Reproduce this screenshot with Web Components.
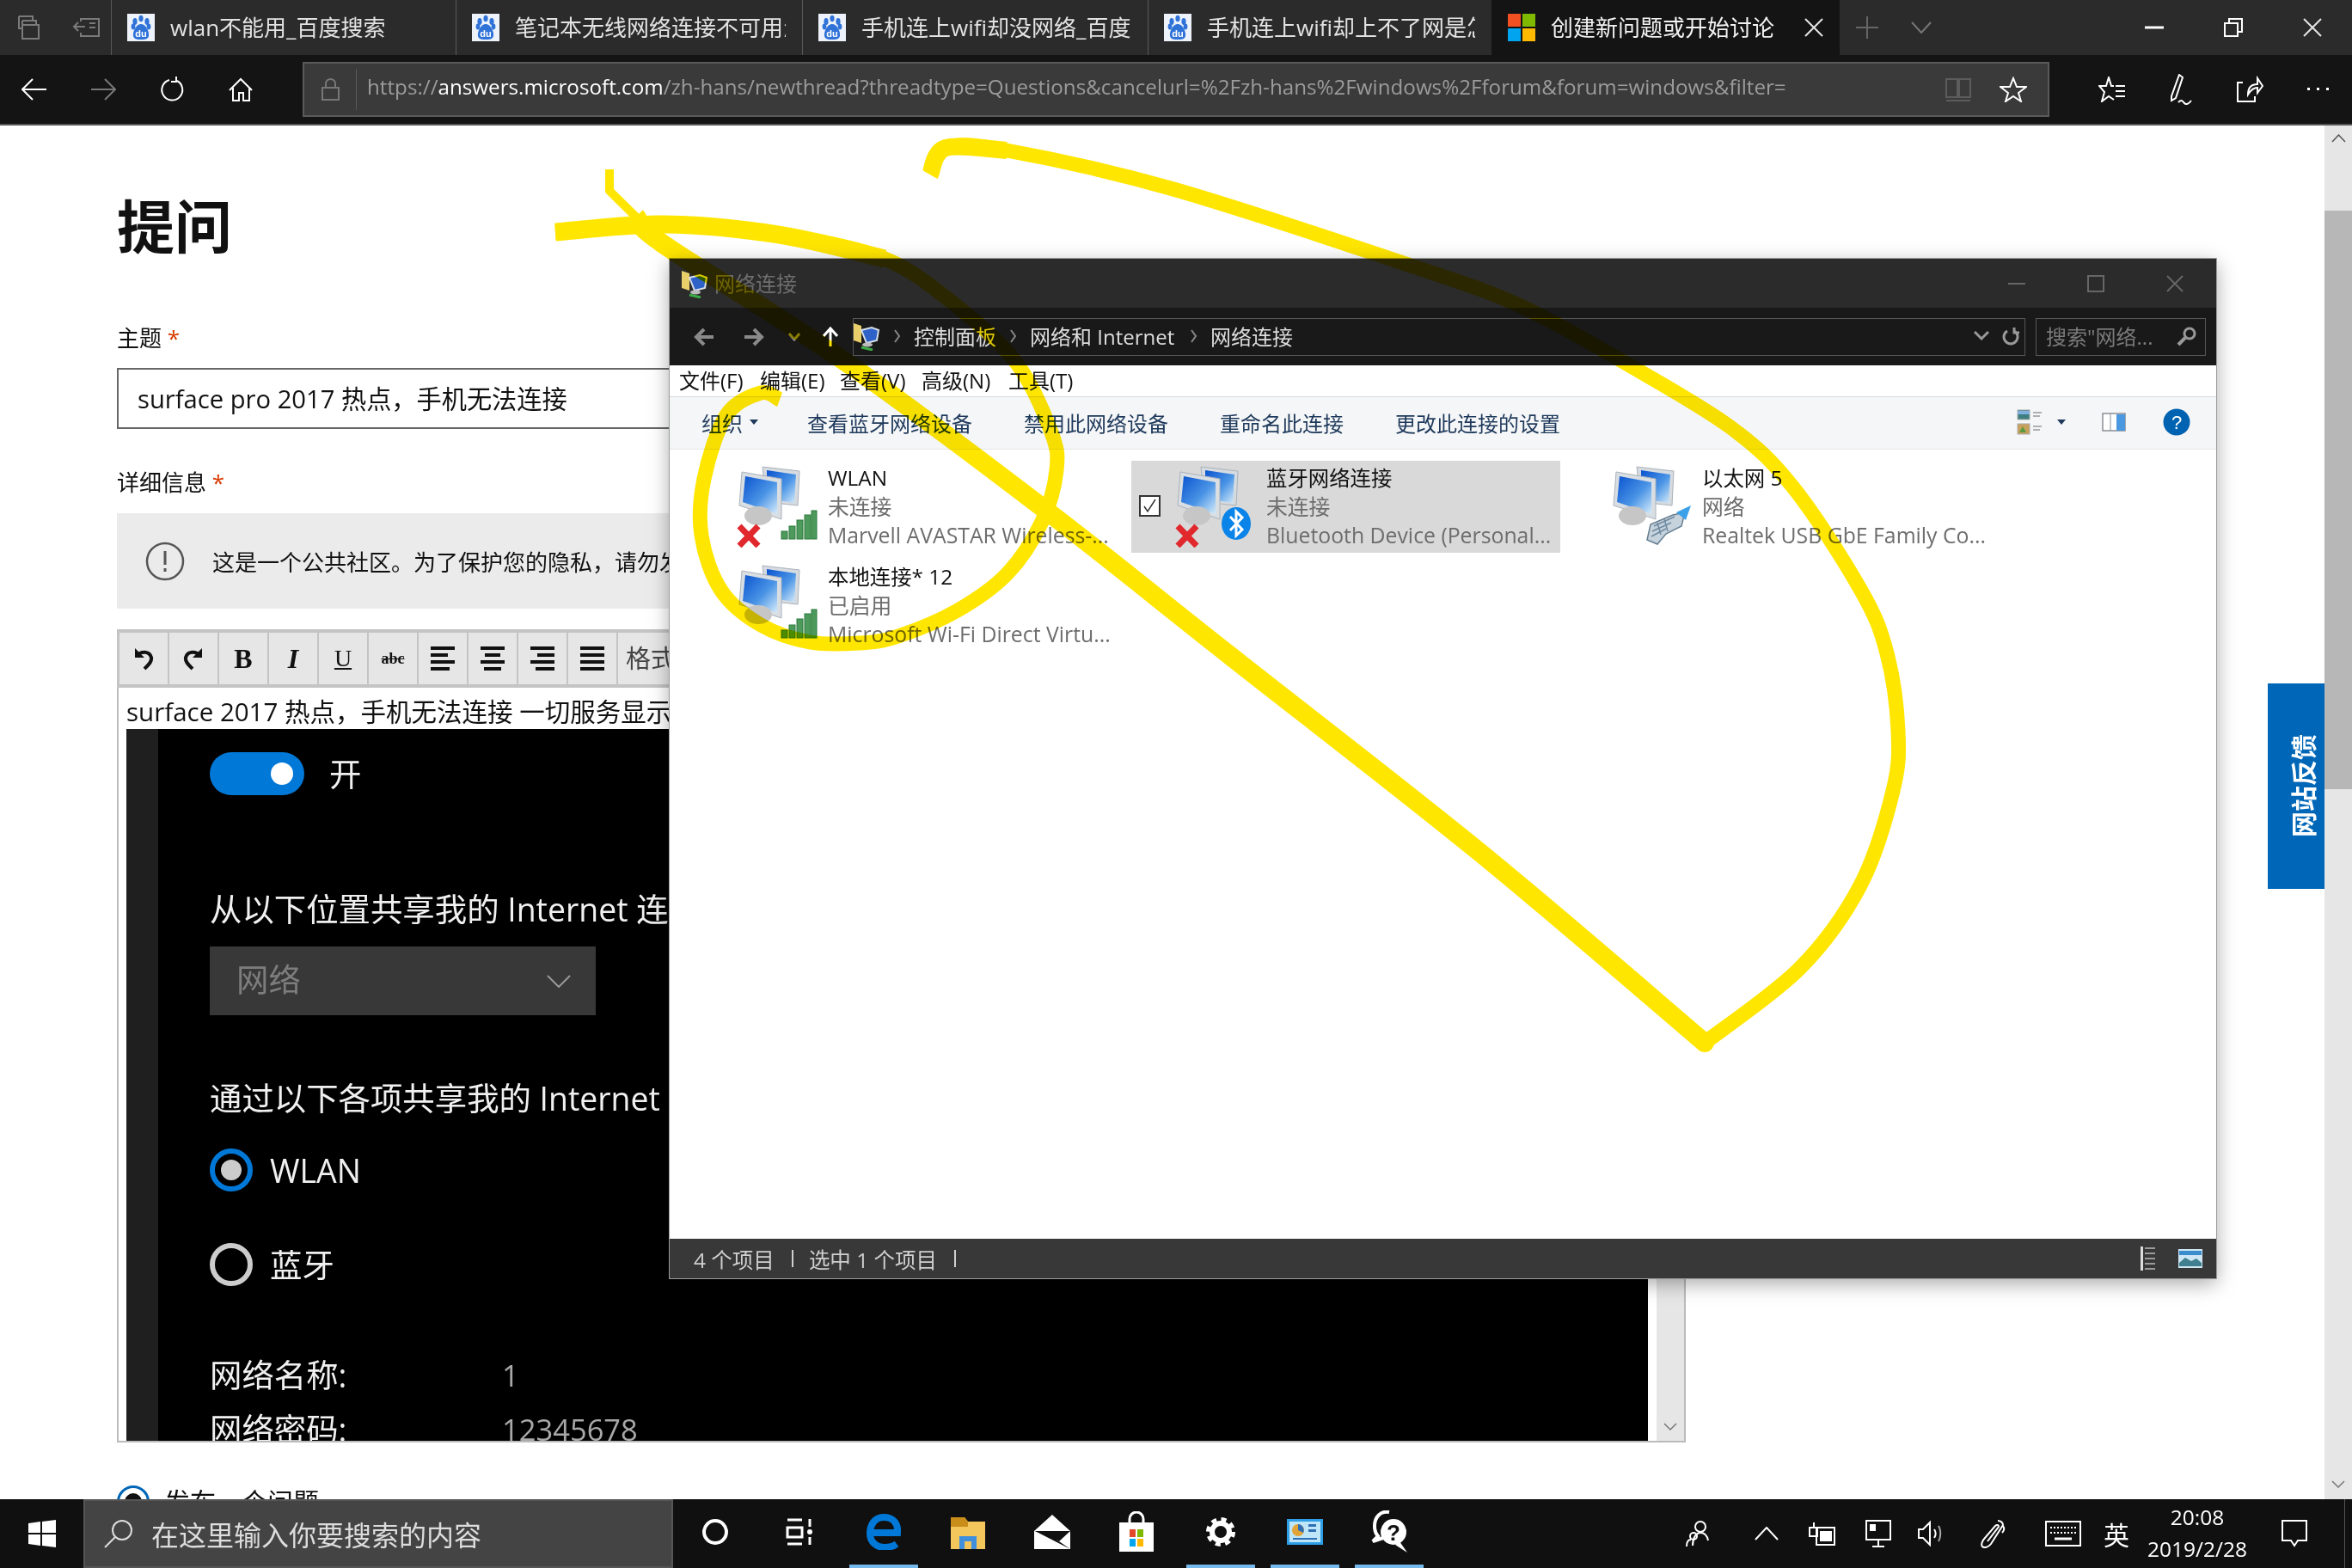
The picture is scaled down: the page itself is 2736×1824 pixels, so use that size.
<!DOCTYPE html>
<html lang="zh-Hans">
<head>
<meta charset="utf-8">
<title>提问</title>
<style>
  html, body { margin: 0; padding: 0; background: #fff; }
  body { width: 2736px; height: 1824px; overflow: hidden; position: relative;
         font-family: "Open Sans", "Noto Sans CJK SC", sans-serif; display: flex; flex-direction: column; }
</style>
</head>
<body>

<edge-chrome></edge-chrome>

<page-main>
  <forum-page></forum-page>
  <page-scrollbar></page-scrollbar>
</page-main>

<win-taskbar></win-taskbar>

<net-window></net-window>
<ink-overlay></ink-overlay>

<script>
const UI_FONT = '"Open Sans", "Noto Sans CJK SC", sans-serif';

/* Icons, sized in real pixels */
const ICONS = {
  tabset: [28, 28, `<g fill="none" stroke="#7a7a7a" stroke-width="2"><path d="M3 1h16v5M3 1v14h4"/><path d="M7 6h16v5M7 6v9"/><rect x="7" y="11" width="19" height="16"/></g>`],
  tabback: [32, 22, `<g fill="none" stroke="#7a7a7a" stroke-width="2"><path d="M10 4V1h21v20H10v-4"/><path d="M15 10H2M7 5l-5 5 5 5M20 6h7M20 11h7"/></g>`],
  plus: [26, 26, `<path d="M13 0v26M0 13h26" stroke="#666" stroke-width="2" fill="none"/>`],
  caret: [24, 14, `<path d="M1 1l11 12L23 1" stroke="#777" stroke-width="2" fill="none"/>`],
  xw: [22, 22, `<path d="M1 1l20 20M21 1L1 21" stroke="#e6e6e6" stroke-width="2" fill="none"/>`],
  min: [22, 4, `<path d="M0 2h22" stroke="#fff" stroke-width="3"/>`],
  restore: [22, 22, `<g fill="none" stroke="#fff" stroke-width="2"><rect x="1" y="6" width="15" height="15"/><path d="M6 6V1h15v15h-5"/></g>`],
  back: [30, 26, `<path d="M29 13H2M13 1L1 13l12 12" stroke="#fff" stroke-width="2" fill="none"/>`],
  forward: [30, 26, `<path d="M1 13h27M17 1l12 12-12 12" stroke="#777" stroke-width="2" fill="none"/>`],
  refresh: [30, 30, `<path d="M12 4a12 12 0 1 0 9 1M20 0v6h-6" stroke="#fff" stroke-width="2" fill="none"/>`],
  home: [30, 28, `<path d="M2 15L15 2l13 13M6 12v15h7v-9h5v9h7V12" stroke="#fff" stroke-width="2" fill="none"/>`],
  lock: [21, 26, `<g fill="none" stroke="#777" stroke-width="2"><rect x="1" y="11" width="19" height="14"/><path d="M5 11V6a5.500 5 0 0 1 11 0v5"/></g>`],
  book: [30, 28, `<g fill="none" stroke="#5c5c5c" stroke-width="2"><path d="M1 2h13v21H1zM16 2h13v21H16zM1 27h28"/></g>`],
  star: [32, 30, `<path d="M16 2l4 10h11l-9 7 3 10-9-6-9 6 3-10-9-7h11z" stroke="#fff" stroke-width="2" fill="none"/>`],
  hub: [32, 30, `<path d="M18 11h-3L12 1 9 11H1l6 7-3 11 8-6 6 4M20 11h11M20 17h11M20 23h11" stroke="#fff" stroke-width="2" fill="none"/>`],
  pen: [34, 36, `<path d="M15 1l4 3-8 24-5 3V26zM14 33c4-4 5-1 7 1s5 1 8-3" stroke="#fff" stroke-width="2" fill="none"/>`],
  share: [32, 32, `<path d="M8 8H2v22h20v-6M14 22c0-9 5-12 11-12V3l6 9-6 8v-6c-5 0-8 3-11 8z" stroke="#fff" stroke-width="2" fill="none"/>`],
  dots: [28, 6, `<g fill="#fff"><rect x="1" y="1" width="3" height="3"/><rect x="12" y="1" width="3" height="3"/><rect x="23" y="1" width="3" height="3"/></g>`],
  notice: [46, 46, `<circle cx="23" cy="23" r="21" fill="none" stroke="#555" stroke-width="2.5"/><path d="M23 11v16M23 31v4" stroke="#555" stroke-width="3" fill="none"/>`],
  undo: [30, 28, `<path d="M5 2v11h11" fill="#111"/><path d="M7 11c5-6 15-6 17 2 1 5-4 9-8 13" fill="none" stroke="#111" stroke-width="4"/>`],
  redo: [30, 28, `<path d="M25 2v11H14" fill="#111"/><path d="M23 11C18 5 8 5 6 13c-1 5 4 9 8 13" fill="none" stroke="#111" stroke-width="4"/>`],
  aleft: [30, 28, `<path d="M1 2h28M1 10h20M1 18h28M1 26h22" stroke="#111" stroke-width="4"/>`],
  acenter: [30, 28, `<path d="M1 2h28M6 10h18M1 18h28M5 26h20" stroke="#111" stroke-width="4"/>`],
  aright: [30, 28, `<path d="M1 2h28M9 10h20M1 18h28M7 26h22" stroke="#111" stroke-width="4"/>`],
  ajust: [30, 28, `<path d="M1 2h28M1 10h28M1 18h28M1 26h28" stroke="#111" stroke-width="4"/>`],
  folderPc: [32, 34, `<path d="M0 2l9 3v20L0 22z" fill="#e9cf6a"/><path d="M9 10l12-3 8 3-2 12-12 3z" fill="#2f62c8" stroke="#d7dee8" stroke-width="2"/><ellipse cx="16" cy="27" rx="6" ry="2.500" fill="#bbb"/><path d="M9 30l13 3" stroke="#3bab45" stroke-width="3"/>`],
  wmin: [20, 2, `<path d="M0 1h20" stroke="#666" stroke-width="2"/>`],
  wmax: [20, 20, `<rect x="1" y="1" width="18" height="18" fill="none" stroke="#666" stroke-width="2"/>`],
  wclose: [20, 20, `<path d="M1 1l18 18M19 1L1 19" stroke="#666" stroke-width="2"/>`],
  navback: [24, 22, `<path d="M23 11H4M12 2l-9 9 9 9" fill="none" stroke="#8a8a8a" stroke-width="4"/>`],
  navfwd: [24, 22, `<path d="M1 11h19M12 2l9 9-9 9" fill="none" stroke="#8a8a8a" stroke-width="4"/>`],
  navdown: [14, 10, `<path d="M1 1l6 7 6-7" fill="none" stroke="#8a8a8a" stroke-width="3"/>`],
  navup: [18, 24, `<path d="M9 23V3M1 11l8-9 8 9" fill="none" stroke="#fff" stroke-width="3"/>`],
  crumb: [8, 16, `<path d="M1 1l5 7-5 7" fill="none" stroke="#888" stroke-width="2"/>`],
  addrdown: [18, 12, `<path d="M1 1l8 8 8-8" fill="none" stroke="#999" stroke-width="3"/>`],
  addrref: [20, 22, `<path d="M6 5a8 8 0 1 0 8 0M14 1v6h6" fill="none" stroke="#999" stroke-width="3"/>`],
  searchex: [24, 24, `<circle cx="15" cy="9" r="6" fill="none" stroke="#999" stroke-width="3"/><path d="M10 14l-8 8" stroke="#999" stroke-width="4"/>`],
  viewopts: [30, 30, `<rect x="1" y="1" width="14" height="11" fill="#3d7f7f" stroke="#aaa"/><rect x="1" y="2" width="14" height="4" fill="#7fb0e0"/><rect x="1" y="17" width="14" height="12" fill="#c9a15a" stroke="#aaa"/><path d="M3 27l4-7 4 7z" fill="#5a9a40"/><path d="M19 4h10M19 8h8M19 20h10M19 24h8" stroke="#999" stroke-width="1.500"/>`],
  tridown: [10, 6, `<path d="M0 0h10L5 6z" fill="#1e395b"/>`],
  pane: [28, 22, `<rect x="1" y="1" width="26" height="20" fill="#fff" stroke="#8a8f96" stroke-width="1.500"/><path d="M10 1v20" stroke="#8a8f96"/><rect x="17" y="2" width="10" height="19" fill="#4a98e0"/>`],
  help: [32, 32, `<circle cx="16" cy="16" r="15.500" fill="#0063b1"/><text x="16" y="24" font-size="22" text-anchor="middle" fill="#fff" font-family="Liberation Sans, sans-serif">?</text>`],
  stdetails: [18, 28, `<rect x="0" y="0" width="3" height="28" fill="#ddd"/><path d="M5 2h12M5 8h12M5 14h12M5 20h12M5 26h12" stroke="#9a9a9a" stroke-width="2"/>`],
  stthumb: [28, 22, `<rect width="28" height="22" fill="#cfe6f4"/><rect x="1" y="2" width="26" height="5" fill="#3a8ccc"/><path d="M1 16l7-6 7 4 6-3 6 5v4H1z" fill="#3f7f8f"/>`],
  cb: [25, 25, `<rect x="1" y="1" width="23" height="23" fill="#fff" stroke="#333" stroke-width="2"/><path d="M6 13l4 6 9-14" fill="none" stroke="#333" stroke-width="1.500"/>`],
  win: [32, 32, `<path d="M0 4l14-2v13H0zM16 2l16-2v15H16zM0 17h14v13L0 28zM16 17h16v15l-16-2z" fill="#fff"/>`],
  mag: [34, 34, `<circle cx="21" cy="13" r="11" fill="none" stroke="#ddd" stroke-width="2"/><path d="M13 21L1 33" stroke="#ddd" stroke-width="2"/>`],
  cortana: [32, 32, `<circle cx="16" cy="16" r="13" fill="none" stroke="#fff" stroke-width="4"/>`],
  taskview: [32, 32, `<path d="M2 2h17M2 30h17" stroke="#fff" stroke-width="3"/><rect x="2" y="11" width="17" height="11" fill="none" stroke="#fff" stroke-width="3"/><path d="M28 1v9M28 22v9" stroke="#fff" stroke-width="3"/><circle cx="28" cy="16" r="3" fill="#fff"/>`],
  edge: [40, 42, `<path d="M6 22h30C37 10 30 4 20 4 10 4 4 12 4 23c0 10 8 16 17 16 6 0 10-1 14-4" fill="none" stroke="#0078d7" stroke-width="8"/>`],
  folder: [42, 42, `<path d="M1 4h16l4 5h20v32H1z" fill="#f3c75c"/><path d="M1 4h16l4 5v6H1z" fill="#c98e1a"/><path d="M11 41V26h20v15h-6V32h-8v9z" fill="#3f8fdd"/>`],
  mail: [44, 42, `<path d="M22 1l21 19v21H1V20z" fill="#fff"/><path d="M2 20l41 0-16 10 16 11z" fill="#111"/><path d="M2 20h41L30 32 22 27z" fill="#111"/><path d="M5 20h34L22 5z" fill="#fff"/><path d="M1 20l17 20H1z" fill="#fff"/>`],
  store: [44, 48, `<rect x="2" y="13" width="40" height="34" fill="#fff"/><path d="M14 13V9a8 8 0 0 1 16 0v4" fill="none" stroke="#fff" stroke-width="3"/><rect x="14" y="21" width="7" height="9" fill="#e2492b"/><rect x="23" y="21" width="7" height="9" fill="#7fba00"/><rect x="14" y="32" width="7" height="9" fill="#00a4ef"/><rect x="23" y="32" width="7" height="9" fill="#ffb900"/>`],
  gear: [36, 36, `<circle cx="18" cy="18" r="10" fill="none" stroke="#fff" stroke-width="6"/><circle cx="18" cy="18" r="14.500" fill="none" stroke="#fff" stroke-width="5" stroke-dasharray="6 5.400"/>`],
  cpanel: [42, 30, `<rect width="42" height="30" fill="#2e9fe6"/><rect x="3" y="3" width="36" height="24" fill="#bfe6f8"/><circle cx="13" cy="13" r="7" fill="#e3a437"/><path d="M13 13V6a7 7 0 0 1 6 10z" fill="#2f6fb6"/><rect x="25" y="6" width="9" height="3" fill="#2f6fb6"/><rect x="25" y="12" width="9" height="3" fill="#2f6fb6"/><rect x="7" y="22" width="28" height="2" fill="#2f6fb6"/>`],
  feedback: [48, 50, `<path d="M24 2C14 0 7 8 7 18c0 6 2 10 4 12L5 36l12-4" fill="none" stroke="#fff" stroke-width="4"/><circle cx="29" cy="25" r="15" fill="#fff"/><path d="M36 36l9 13-14-9z" fill="#fff"/><text x="29" y="35" font-size="26" font-weight="700" text-anchor="middle" fill="#111" font-family="Liberation Sans, sans-serif">?</text>`],
  people: [28, 32, `<circle cx="17" cy="8" r="6" fill="none" stroke="#fff" stroke-width="2"/><path d="M8 30c0-9 4-15 9-15s8 4 9 9M1 31c0-5 2-8 5-8" fill="none" stroke="#fff" stroke-width="2"/><circle cx="9" cy="19" r="4" fill="none" stroke="#fff" stroke-width="2"/>`],
  trayup: [28, 16, `<path d="M1 15L14 1l13 14" fill="none" stroke="#fff" stroke-width="2"/>`],
  battery: [32, 28, `<path d="M6 1v6M1 7h9v10H1z" fill="none" stroke="#fff" stroke-width="2"/><rect x="9" y="7" width="21" height="20" fill="none" stroke="#fff" stroke-width="2"/><rect x="13" y="11" width="14" height="12" fill="#fff"/>`],
  netpc: [30, 32, `<rect x="1" y="1" width="28" height="22" fill="none" stroke="#fff" stroke-width="2"/><path d="M8 31h14M15 23v8" stroke="#fff" stroke-width="2"/><rect x="5" y="5" width="7" height="8" fill="#fff"/>`],
  volume: [32, 32, `<path d="M2 11h5l8-8v26l-8-8H2z" fill="none" stroke="#fff" stroke-width="2"/><path d="M20 11c2 3 2 7 0 10" fill="none" stroke="#fff" stroke-width="2"/><path d="M25 7c3 5 3 13 0 18" fill="none" stroke="#aaa" stroke-width="2"/>`],
  inkpen: [30, 34, `<path d="M21 2c3 0 6 2 6 5L13 29c-3 4-8 5-10 3s0-7 3-10L18 8c2-2 4-1 4 1L9 26M27 8c2 3 1 6-1 8" fill="none" stroke="#fff" stroke-width="2"/>`],
  keyboard: [42, 30, `<rect x="1" y="1" width="40" height="28" fill="none" stroke="#fff" stroke-width="2"/><path d="M6 8h30M6 14h30" stroke="#fff" stroke-width="2" stroke-dasharray="2 2"/><path d="M11 21h20" stroke="#fff" stroke-width="3"/>`],
  notify: [32, 32, `<path d="M1 1h28v23H19l-4 6-4-6H1z" fill="none" stroke="#fff" stroke-width="2"/>`],
  upthin: [17, 10, `<path d="M1 9l7.500-8L16 9" fill="none" stroke="#555" stroke-width="1.500"/>`],
  dnthin: [16, 9, `<path d="M1 1l7 7 7-7" fill="none" stroke="#777" stroke-width="1.500"/>`],
  dropchev: [28, 15, `<path d="M1 1l13 13L27 1" fill="none" stroke="#999" stroke-width="2"/>`]
};

class BaseEl extends HTMLElement {
  constructor() {
    super();
    this.attachShadow({ mode: 'open' });
  }
  styles() { return ''; }
  template() { return ''; }
  connectedCallback() {
    this.shadowRoot.innerHTML = `<style>${this.styles()}</style>${this.template()}`;
  }
}

class UiIcon extends BaseEl {
  styles() { return ':host{display:inline-flex;flex:none;line-height:0}'; }
  template() {
    const [w, h, body] = ICONS[this.getAttribute('name')];
    return `<svg width="${w}" height="${h}" viewBox="0 0 ${w} ${h}">${body}</svg>`;
  }
}

class EdgeTab extends BaseEl {
  styles() {
    return `:host{display:flex;align-items:center;height:64px;box-sizing:border-box;flex:none;
      padding:0 19px 0 18px;gap:18px;color:#e2e2e2;font-size:26px;overflow:hidden;white-space:nowrap;
      border-left:1px solid #5a5a5a}
      :host([active]){background:#141414;border-left:0;color:#f2f2f2;padding-left:19px;justify-content:flex-start}
      .txt{flex:1;overflow:hidden;padding-bottom:3px}
      .fav{width:32px;height:32px;flex:none}`;
  }
  template() {
    const active = this.hasAttribute('active');
    const fav = active
      ? `<svg class="fav" viewBox="0 0 32 32"><rect width="15" height="15" fill="#f25022"/><rect x="17" width="15" height="15" fill="#7fba00"/><rect y="17" width="15" height="15" fill="#00a4ef"/><rect x="17" y="17" width="15" height="15" fill="#ffb900"/></svg>`
      : `<svg class="fav" viewBox="0 0 32 32"><rect width="32" height="32" fill="#eef3fb"/><g fill="#2f72d8"><ellipse cx="9" cy="9" rx="2.600" ry="4"/><ellipse cx="16" cy="5.500" rx="2.600" ry="3.800"/><ellipse cx="23" cy="9" rx="2.600" ry="4"/><ellipse cx="7" cy="15" rx="2.400" ry="3.400"/><ellipse cx="25" cy="15" rx="2.400" ry="3.400"/><path d="M16 12c5 0 10 8 9 14-1 4-5 4-9 4s-8 0-9-4c-1-6 4-14 9-14z"/></g><text x="16" y="27" font-size="11" font-weight="700" text-anchor="middle" fill="#fff" font-family="Liberation Sans, sans-serif">du</text></svg>`;
    const close = active ? '<ui-icon name="xw"></ui-icon>' : '';
    return `${fav}<span class="txt"><slot></slot></span>${close}`;
  }
}

class EdgeChrome extends BaseEl {
  styles() {
    return `:host{display:block;flex:none;font-family:${UI_FONT};background:#141414;border-bottom:2px solid #555}
      .tabs{display:flex;height:64px;background:#2b2b2b;align-items:center}
      .left{display:flex;width:129px;flex:none;align-items:center;padding-left:19px;gap:37px;box-sizing:border-box}
      .new{display:flex;align-items:center;width:64px;justify-content:center;flex:none}
      .more{display:flex;align-items:center;width:62px;justify-content:center;flex:none}
      .spring{flex:1}
      .wbtn{width:92px;display:flex;justify-content:center;flex:none}
      .bar{display:flex;height:80px;align-items:center}
      .nbtn{width:80px;height:80px;display:flex;align-items:center;justify-content:center;flex:none}
      .url{margin-left:32px;width:2032px;height:64px;box-sizing:border-box;background:#3a3a3a;border:2px solid #5a5a5a;
        display:flex;align-items:center;flex:none;overflow:hidden}
      .lock{width:60px;display:flex;justify-content:center;flex:none}
      .sep{width:1px;height:48px;background:#5a5a5a;flex:none}
      .addr{padding-left:12px;padding-bottom:7px;font-size:24.2px;color:#9c9c9c;white-space:nowrap;overflow:hidden;flex:1}
      .addr b{font-weight:400;color:#fff}
      .ubtn{width:64px;display:flex;justify-content:center;flex:none}
      .gap{width:33px;flex:none}`;
  }
  template() {
    return `
      <div class="tabs">
        <div class="left"><ui-icon name="tabset"></ui-icon><ui-icon name="tabback"></ui-icon></div>
        <edge-tab style="width:401px">wlan不能用_百度搜索</edge-tab>
        <edge-tab style="width:403px">笔记本无线网络连接不可用怎</edge-tab>
        <edge-tab style="width:402px">手机连上wifi却没网络_百度搜</edge-tab>
        <edge-tab style="width:400px">手机连上wifi却上不了网是怎</edge-tab>
        <edge-tab active style="width:405px">创建新问题或开始讨论</edge-tab>
        <div class="new"><ui-icon name="plus"></ui-icon></div>
        <div class="more"><ui-icon name="caret"></ui-icon></div>
        <div class="spring"></div>
        <div class="wbtn"><ui-icon name="min"></ui-icon></div>
        <div class="wbtn"><ui-icon name="restore"></ui-icon></div>
        <div class="wbtn" style="width:92px"><ui-icon name="xw"></ui-icon></div>
      </div>
      <div class="bar">
        <div class="nbtn"><ui-icon name="back"></ui-icon></div>
        <div class="nbtn"><ui-icon name="forward"></ui-icon></div>
        <div class="nbtn"><ui-icon name="refresh"></ui-icon></div>
        <div class="nbtn"><ui-icon name="home"></ui-icon></div>
        <div class="url">
          <div class="lock"><ui-icon name="lock"></ui-icon></div>
          <div class="sep"></div>
          <div class="addr">https://<b>answers.microsoft.com</b>/zh-hans/newthread?threadtype=Questions&amp;cancelurl=%2Fzh-hans%2Fwindows%2Fforum&amp;forum=windows&amp;filter=</div>
          <div class="ubtn"><ui-icon name="book"></ui-icon></div>
          <div class="ubtn"><ui-icon name="star"></ui-icon></div>
          <div style="width:8px"></div>
        </div>
        <div class="gap"></div>
        <div class="nbtn"><ui-icon name="hub"></ui-icon></div>
        <div class="nbtn"><ui-icon name="pen"></ui-icon></div>
        <div class="nbtn"><ui-icon name="share"></ui-icon></div>
        <div class="nbtn"><ui-icon name="dots"></ui-icon></div>
      </div>`;
  }
}

class PageMain extends BaseEl {
  styles() { return ':host{display:flex;flex:1;min-height:0;position:relative;background:#fff}'; }
  template() { return '<slot></slot>'; }
}

class PageScrollbar extends BaseEl {
  styles() {
    return `:host{display:flex;flex-direction:column;width:32px;flex:none;background:#e6e6e6}
      .top{height:99px;display:flex;justify-content:center;padding-top:10px;box-sizing:border-box}
      .thumb{height:673px;background:#b7b7b7}
      .sp{flex:1}
      .bot{height:22px;display:flex;justify-content:center;align-items:start}`;
  }
  template() {
    return `<div class="top"><ui-icon name="upthin"></ui-icon></div><div class="thumb"></div><div class="sp"></div>
      <div class="bot"><ui-icon name="dnthin"></ui-icon></div>`;
  }
}

class EditorToolbar extends BaseEl {
  styles() {
    return `:host{display:flex;height:68px;box-sizing:border-box;background:#c4c4c4;padding:4px 0 4px 3px;gap:2px;font-family:${UI_FONT}}
      .b{width:56px;background:#e6e6e6;display:flex;align-items:center;justify-content:center;flex:none;color:#111}
      .serif{font:700 32px "Liberation Serif",serif}
      .u{font:400 28px "Liberation Serif",serif;text-decoration:underline}
      .s{font:700 18px "Liberation Serif",serif;text-decoration:line-through}
      .rest{flex:1;background:#e6e6e6;font-size:29px;color:#444;padding-left:9px;line-height:60px;overflow:hidden;white-space:nowrap}`;
  }
  template() {
    return `<div class="b"><ui-icon name="undo"></ui-icon></div>
      <div class="b"><ui-icon name="redo"></ui-icon></div>
      <div class="b serif">B</div>
      <div class="b serif"><i>I</i></div>
      <div class="b u">U</div>
      <div class="b s">abc</div>
      <div class="b"><ui-icon name="aleft"></ui-icon></div>
      <div class="b"><ui-icon name="acenter"></ui-icon></div>
      <div class="b"><ui-icon name="aright"></ui-icon></div>
      <div class="b"><ui-icon name="ajust"></ui-icon></div>
      <div class="rest">格式</div>`;
  }
}

class HotspotShot extends BaseEl {
  styles() {
    return `:host{display:flex;flex:1;min-height:0;background:#000;overflow:hidden;color:#f0f0f0;font-size:37.4px;font-family:${UI_FONT}}
      .strip{width:37px;background:#1f1f1f;flex:none}
      .col{padding-left:60px;flex:1;line-height:50px;white-space:nowrap}
      .row{display:flex;align-items:center;height:50px}
      .row span,.lbl{position:relative;top:1px}
      .toggle{width:110px;height:50px;border-radius:25px;background:#0078d7;position:relative;flex:none;display:flex;align-items:center;justify-content:flex-end;padding-right:13px;box-sizing:border-box}
      .knob{width:26px;height:26px;border-radius:50%;background:#fff}
      .dd{width:449px;height:80px;background:#383838;color:#7d7d7d;display:flex;align-items:center;justify-content:space-between;padding:0 29px 3px 31px;box-sizing:border-box;margin-top:18px}
      .dd ui-icon{margin-top:3px}
      .radio{width:50px;height:50px;box-sizing:border-box;border-radius:50%;border:6px solid #ccc;display:flex;align-items:center;justify-content:center;flex:none;margin-right:20px}
      .radio.on{border-color:#0078d7}
      .dot{width:24px;height:24px;border-radius:50%;background:#ccc}
      .kv{display:flex;position:relative;top:-1px}
      .kv span:first-child{width:340px}
      .kv span:last-child{color:#a8a8a8;font-size:34.500px}`;
  }
  template() {
    return `<div class="strip"></div>
      <div class="col">
        <div class="row" style="margin-top:27px"><div class="toggle"><div class="knob"></div></div><span style="margin-left:29px">开</span></div>
        <div style="margin-top:108px;margin-bottom:1px">从以下位置共享我的 Internet 连接</div>
        <div class="dd"><span>网络</span><ui-icon name="dropchev"></ui-icon></div>
        <div class="lbl" style="margin-top:71px">通过以下各项共享我的 Internet 连接</div>
        <div class="row" style="margin-top:34px"><div class="radio on"><div class="dot"></div></div><span>WLAN</span></div>
        <div class="row" style="margin-top:60px"><div class="radio"></div><span>蓝牙</span></div>
        <div class="kv" style="margin-top:80px"><span>网络名称:</span><span>1</span></div>
        <div class="kv" style="margin-top:13px"><span>网络密码:</span><span>12345678</span></div>
      </div>`;
  }
}

class ForumPage extends BaseEl {
  styles() {
    return `:host{display:block;flex:1;min-width:0;overflow:hidden;padding-left:136px;color:#111;font-family:${UI_FONT};position:relative}
      .form{width:1825px}
      h1{font-size:67px;line-height:82px;margin:76px 0 0;font-weight:700}
      label{display:block;font-size:26px;line-height:36px}
      label i{color:#d83b01;font-style:normal}
      .input{height:71px;box-sizing:border-box;border:2px solid #666;font-size:29.2px;line-height:69px;padding-left:22px;white-space:nowrap;overflow:hidden;margin-top:17px}
      .notice{height:111px;background:#ebebeb;margin-top:18px;display:flex;align-items:center;padding-left:33px;gap:32px;font-size:26px;white-space:nowrap;overflow:hidden}
      .editor{height:878px;box-sizing:border-box;border:solid #bbb;border-width:0 2px 2px;display:flex}
      .ed-main{flex:1;min-width:0;display:flex;flex-direction:column;padding-left:9px}
      .ed-line{height:48px;line-height:55px;font-size:29.5px;white-space:nowrap;flex:none;overflow:hidden}
      .ed-bar{width:32px;margin-left:10px;background:#e6e6e6;flex:none;display:flex;align-items:flex-end;justify-content:center;padding-bottom:12px;box-sizing:border-box}
      .pub{display:flex;align-items:flex-start;margin-top:50px;font-size:30px;line-height:38px;gap:17px}
      .r{width:38px;height:38px;border-radius:50%;box-sizing:border-box;border:3px solid #0067b8;display:flex;align-items:center;justify-content:center;flex:none}
      .r div{width:20px;height:20px;border-radius:50%;background:#111}
      .fb{position:absolute;right:0;top:649px;width:66px;height:239px;box-sizing:border-box;padding-right:14px;background:#0067b8;color:#fff;
        display:flex;align-items:center;justify-content:center;writing-mode:vertical-rl;text-orientation:sideways;transform:rotate(180deg);
        font-size:30px;font-weight:700}`;
  }
  template() {
    return `<div class="form">
        <h1>提问</h1>
        <label style="margin-top:71px">主题 <i>*</i></label>
        <div class="input">surface pro 2017 热点，手机无法连接</div>
        <label style="margin-top:44px">详细信息 <i>*</i></label>
        <div class="notice"><ui-icon name="notice"></ui-icon><span>这是一个公共社区。为了保护您的隐私，请勿发布个人信息</span></div>
        <editor-toolbar style="margin-top:24px"></editor-toolbar>
        <div class="editor">
          <div class="ed-main">
            <div class="ed-line">surface 2017 热点，手机无法连接 一切服务显示正常</div>
            <hotspot-shot></hotspot-shot>
          </div>
          <div class="ed-bar"><ui-icon name="dnthin"></ui-icon></div>
        </div>
        <div class="pub"><div class="r"><div></div></div>发布一个问题</div>
      </div>
      <div class="fb">网站反馈</div>`;
  }
}

/* One connection tile in the explorer content */
class NetItem extends BaseEl {
  styles() {
    return `:host{display:flex;height:107px;box-sizing:border-box;padding:3px 0 0 9px;font-size:24.8px;line-height:33.5px;color:#6d6d6d;white-space:nowrap;min-width:0}
      :host([selected]){background:#d9d9d9}
      .cb{width:25px;flex:none;margin-right:17px;padding-top:37px;line-height:0;visibility:hidden}
      :host([selected]) .cb{visibility:visible}
      .ic{flex:none;margin-right:12px;margin-top:3px;line-height:0}
      ::slotted([slot=name]){color:#111;font-size:24.4px}
      .l{display:block}`;
  }
  template() {
    const kind = this.getAttribute('kind');
    const x = `<path d="M3 70l22 23M25 70L3 93" stroke="#e0282d" stroke-width="7"/>`;
    const bars = `<g fill="#4d9a5c" stroke="#2d7a3c" stroke-width="1"><rect x="52" y="76" width="7" height="9"/><rect x="61" y="70" width="7" height="15"/><rect x="70" y="63" width="7" height="22"/><rect x="79" y="57" width="7" height="28"/><rect x="87" y="52" width="6" height="33"/></g>`;
    const badge = {
      wlan: x + bars,
      local: bars,
      bt: x + `<ellipse cx="71" cy="67" rx="17" ry="19" fill="#0a84e8"/><path d="M64 59l14 15-7 7V53l7 7-14 15" fill="none" stroke="#fff" stroke-width="3"/>`,
      eth: `<path d="M42 86l4-18 26-11 14-3-4 16-18 9-10 12z" fill="#c6d2dc" stroke="#667f92" stroke-width="1.500"/><path d="M50 70l24-11M48 76l22-10M47 82l17-9M54 66l4 14M62 62l4 14" stroke="#6e8aa0" stroke-width="1.500"/><path d="M76 54l17-8-6 17z" fill="#3aa0e8"/>`
    }[kind];
    return `<div class="cb"><ui-icon name="cb"></ui-icon></div>
      <div class="ic"><svg width="94" height="95" viewBox="0 0 94 95">
        <defs><linearGradient id="g" x1="0" y1="0" x2="1" y2="1"><stop offset="0" stop-color="#0a53cf"/><stop offset=".55" stop-color="#4a94e6"/><stop offset="1" stop-color="#d6ecfa"/></linearGradient></defs>
        <polygon points="30,1 73,6 71,46 34,42" fill="#d5dbe0" stroke="#aab2ba"/><polygon points="35,5 69,10 67,43 35,38" fill="url(#g)"/>
        <polygon points="6,7 52,15 52,62 3,46" fill="#d9dee3" stroke="#aab2ba"/><polygon points="10,12 47,19 47,56 7,42" fill="url(#g)"/>
        <ellipse cx="25" cy="58" rx="16" ry="11" fill="#c6c6c6"/>
        ${badge}
      </svg></div>
      <div><span class="l"><slot name="name"></slot></span><span class="l"><slot name="status"></slot></span><span class="l"><slot name="device"></slot></span></div>`;
  }
}

class NetWindow extends BaseEl {
  styles() {
    return `:host{position:absolute;left:779px;top:301px;width:1799px;height:1186px;display:flex;flex-direction:column;box-sizing:border-box;
        background:#fff;box-shadow:0 6px 22px rgba(0,0,0,.35);outline:1px solid #9c9c9c;font-family:${UI_FONT};font-size:24px;z-index:5}
      .title{height:57px;background:#2b2b2b;display:flex;align-items:center;flex:none;color:#6e6e6e;padding:0 2px 0 14px}
      .title .t{margin-left:6px;flex:1;margin-top:-3px}
      .wb{width:92px;display:flex;justify-content:center;flex:none}
      .nav{height:67px;background:#191919;display:flex;align-items:center;flex:none;padding-left:11px;padding-right:12px;color:#ddd}
      .nb{height:44px;display:flex;align-items:center;justify-content:center;flex:none}
      .addr{margin-left:2px;height:44px;box-sizing:border-box;border:1px solid #565656;flex:1;display:flex;align-items:center;white-space:nowrap;padding-bottom:2px}
      .crumb{display:flex;justify-content:center;flex:none}
      .search{margin-left:12px;width:198px;height:44px;box-sizing:border-box;border:1px solid #565656;display:flex;align-items:center;justify-content:space-between;padding:0 9px 2px 11px;color:#7a7a7a;flex:none}
      .menu{height:37px;display:flex;align-items:center;padding:0 0 3px 11px;border-bottom:1px solid #d9d9d9;box-sizing:border-box;flex:none;color:#111}
      .menu span{flex:none;white-space:nowrap}
      .cmd{height:61px;background:#f5f6f7;border-bottom:1px solid #e4e6e8;box-sizing:border-box;display:flex;align-items:center;padding:0 30px 2px 37px;gap:60px;color:#1e395b;flex:none;white-space:nowrap}
      .cmd .org{width:63px;display:flex;align-items:center;gap:8px}
      .cmd .tools{margin-left:auto;display:flex;align-items:center}
      .content{flex:1;display:grid;grid-template-columns:502px 499px 500px;column-gap:8px;row-gap:8px;grid-auto-rows:107px;padding:13px 0 0 27px;align-content:start}
      .status{height:46px;background:#383838;color:#cfcfcf;display:flex;align-items:center;flex:none;padding:0 16px 0 28px;white-space:nowrap;font-size:24.5px}
      .status .sp{flex:1}
      .bar{width:2px;height:20px;background:#cfcfcf;flex:none}`;
  }
  template() {
    return `
      <div class="title"><ui-icon name="folderPc"></ui-icon><span class="t">网络连接</span>
        <div class="wb"><ui-icon name="wmin"></ui-icon></div><div class="wb"><ui-icon name="wmax"></ui-icon></div><div class="wb"><ui-icon name="wclose"></ui-icon></div>
      </div>
      <div class="nav">
        <div class="nb" style="width:58px"><ui-icon name="navback"></ui-icon></div>
        <div class="nb" style="width:58px"><ui-icon name="navfwd"></ui-icon></div>
        <div class="nb" style="width:36px"><ui-icon name="navdown"></ui-icon></div>
        <div class="nb" style="width:48px"><ui-icon name="navup"></ui-icon></div>
        <div class="addr">
          <ui-icon name="folderPc"></ui-icon>
          <div class="crumb" style="width:38px"><ui-icon name="crumb"></ui-icon></div>控制面板
          <div class="crumb" style="width:39px"><ui-icon name="crumb"></ui-icon></div><span style="width:171px">网络和 Internet</span>
          <div class="crumb" style="width:39px"><ui-icon name="crumb"></ui-icon></div>网络连接
          <div style="flex:1"></div>
          <ui-icon name="addrdown"></ui-icon><div style="width:15px"></div><ui-icon name="addrref"></ui-icon><div style="width:6px"></div>
        </div>
        <div class="search"><span>搜索"网络...</span><ui-icon name="searchex"></ui-icon></div>
      </div>
      <div class="menu"><span style="width:94px">文件(F)</span><span style="width:93px">编辑(E)</span><span style="width:95px">查看(V)</span><span style="width:101px">高级(N)</span><span>工具(T)</span></div>
      <div class="cmd">
        <span class="org">组织<ui-icon name="tridown"></ui-icon></span>
        <span>查看蓝牙网络设备</span><span>禁用此网络设备</span><span>重命名此连接</span><span>更改此连接的设置</span>
        <span class="tools"><ui-icon name="viewopts"></ui-icon><ui-icon name="tridown" style="margin:0 42px 0 17px"></ui-icon><ui-icon name="pane"></ui-icon><ui-icon name="help" style="margin-left:43px"></ui-icon></span>
      </div>
      <div class="content">
        <net-item kind="wlan"><span slot="name">WLAN</span><span slot="status">未连接</span><span slot="device">Marvell AVASTAR Wireless-...</span></net-item>
        <net-item kind="bt" selected><span slot="name">蓝牙网络连接</span><span slot="status">未连接</span><span slot="device">Bluetooth Device (Personal...</span></net-item>
        <net-item kind="eth"><span slot="name">以太网 5</span><span slot="status">网络</span><span slot="device">Realtek USB GbE Family Co...</span></net-item>
        <net-item kind="local"><span slot="name">本地连接* 12</span><span slot="status">已启用</span><span slot="device">Microsoft Wi-Fi Direct Virtu...</span></net-item>
      </div>
      <div class="status">
        <span>4 个项目</span><div class="bar" style="margin:0 18px 0 20px"></div><span>选中 1 个项目</span><div class="bar" style="margin-left:20px"></div>
        <div class="sp"></div><ui-icon name="stdetails"></ui-icon><ui-icon name="stthumb" style="margin-left:26px"></ui-icon>
      </div>`;
  }
}

class TaskBtn extends BaseEl {
  styles() {
    return `:host{display:flex;flex-direction:column;align-items:center;width:98px;height:80px;flex:none}
      .ic{flex:1;display:flex;align-items:center;justify-content:center}
      .u{width:80px;height:4px;flex:none}
      :host([running]) .u{background:#76b9ed}`;
  }
  template() {
    return `<div class="ic"><ui-icon name="${this.getAttribute('icon')}"></ui-icon></div><div class="u"></div>`;
  }
}

class WinTaskbar extends BaseEl {
  styles() {
    return `:host{display:flex;height:80px;flex:none;background:#101010;color:#fff;font-family:${UI_FONT};position:relative;z-index:6}
      .start{width:97px;display:flex;align-items:center;justify-content:center;flex:none}
      .search{width:686px;box-sizing:border-box;background:#444;border:2px solid #555;display:flex;align-items:center;padding-left:22px;gap:21px;font-size:32px;color:#dcdcdc;flex:none}
      .sp{flex:1}
      .t{display:flex;align-items:center;justify-content:center;flex:none}
      .clock{width:126px;font-size:24.5px;line-height:37px;text-align:center;flex:none;display:flex;flex-direction:column;justify-content:center;padding-bottom:2px;box-sizing:border-box}
      .end{flex:none;box-sizing:border-box;border-left:1px solid #555;margin-left:6px;width:9px}`;
  }
  template() {
    const tray = [['people', 80], ['trayup', 80], ['battery', 50], ['netpc', 80], ['volume', 42], ['inkpen', 102], ['keyboard', 62]];
    return `<div class="start"><ui-icon name="win"></ui-icon></div>
      <div class="search"><ui-icon name="mag"></ui-icon>在这里输入你要搜索的内容</div>
      <task-btn icon="cortana"></task-btn><task-btn icon="taskview"></task-btn>
      <task-btn icon="edge" running></task-btn><task-btn icon="folder"></task-btn><task-btn icon="mail"></task-btn>
      <task-btn icon="store"></task-btn><task-btn icon="gear" running></task-btn><task-btn icon="cpanel" running></task-btn><task-btn icon="feedback" running></task-btn>
      <div class="sp"></div>
      ${tray.map(([n, w]) => `<div class="t" style="width:${w}px"><ui-icon name="${n}"></ui-icon></div>`).join('')}
      <div class="t" style="width:62px;font-size:30px">英</div>
      <div class="clock"><span>20:08</span><span>2019/2/28</span></div>
      <div class="t" style="width:102px"><ui-icon name="notify"></ui-icon></div>
      <div class="end"></div>`;
  }
}

/* Yellow highlighter drawn over the whole screen, multiply so it darkens what lies under it */
class InkOverlay extends BaseEl {
  styles() { return ':host{position:absolute;inset:0;pointer-events:none;mix-blend-mode:multiply;z-index:9;display:block}'; }
  smooth(pts) {
    let d = `M${pts[0][0]} ${pts[0][1]}`;
    for (let i = 0; i < pts.length - 1; i++) {
      const p0 = pts[Math.max(i - 1, 0)], p1 = pts[i], p2 = pts[i + 1], p3 = pts[Math.min(i + 2, pts.length - 1)];
      const c1 = [p1[0] + (p2[0] - p0[0]) / 6, p1[1] + (p2[1] - p0[1]) / 6];
      const c2 = [p2[0] - (p3[0] - p1[0]) / 6, p2[1] - (p3[1] - p1[1]) / 6];
      d += `C${c1[0]} ${c1[1]} ${c2[0]} ${c2[1]} ${p2[0]} ${p2[1]}`;
    }
    return d;
  }
  template() {
    const loop = [[646, 270], [773, 261], [906, 273], [1029, 301], [1114, 357], [1183, 423], [1223, 503], [1229, 547], [1212, 607], [1172, 667], [1114, 710], [1045, 740], [1000, 748], [942, 747], [885, 727], [839, 687], [816, 623], [819, 557], [845, 483], [885, 457], [907, 465]];
    const diag = [[740, 252], [773, 285], [982, 420], [1212, 590], [1430, 762], [1722, 992], [1983, 1213]];
    const curve = [[1983, 1213], [2094, 1126], [2164, 1030], [2202, 920], [2208, 850], [2195, 760], [2165, 687], [2086, 567], [2013, 497], [1892, 423], [1771, 357], [1650, 312], [1365, 220], [1171, 175], [1100, 172], [1082, 203]];
    return `<svg width="2736" height="1824" viewBox="0 0 2736 1824" fill="none" stroke="#ffe600" stroke-linejoin="round">
      <path d="${this.smooth(loop)}" stroke-width="17"/>
      <path d="${this.smooth(loop.slice(0, 4))}" stroke-width="21"/>
      <path d="M709 197V222L768 280" stroke-width="10"/>
      <path d="${this.smooth(diag)}" stroke-width="22"/>
      <path d="${this.smooth(curve)}" stroke-width="17"/>
      <path d="${this.smooth(curve.slice(-3))}" stroke-width="20"/>
      <circle cx="1983" cy="1213" r="11" fill="#ffe600" stroke="none"/>
    </svg>`;
  }
}

const ELEMENTS = {
  'ui-icon': UiIcon, 'edge-tab': EdgeTab, 'edge-chrome': EdgeChrome, 'page-main': PageMain,
  'page-scrollbar': PageScrollbar, 'editor-toolbar': EditorToolbar, 'hotspot-shot': HotspotShot,
  'forum-page': ForumPage, 'net-item': NetItem, 'net-window': NetWindow, 'task-btn': TaskBtn,
  'win-taskbar': WinTaskbar, 'ink-overlay': InkOverlay
};
Object.entries(ELEMENTS).forEach(([name, cls]) => customElements.define(name, cls));
</script>
</body>
</html>
